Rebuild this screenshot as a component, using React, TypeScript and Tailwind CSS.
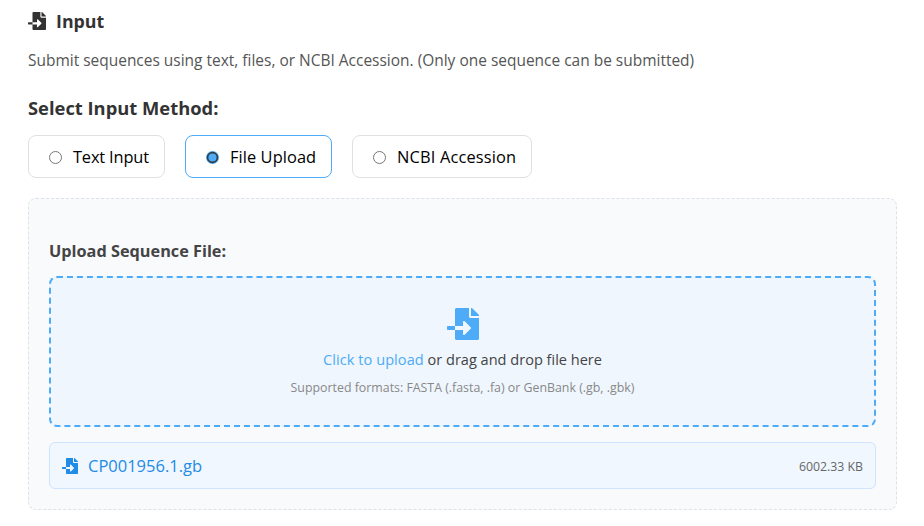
import { useState } from 'react';
import { FaFileImport } from 'react-icons/fa';

const methods = [
  { label: 'Text Input', width: 'w-[137px]', tracking: '-tracking-[0.01em]' },
  { label: 'File Upload', width: 'w-[147px]', tracking: 'tracking-[0.005em]' },
  { label: 'NCBI Accession', width: 'w-[180px]', tracking: 'tracking-[0.01em]' },
];

function Radio({ checked }: { checked: boolean }) {
  return (
    <svg viewBox="0 0 13 13" className="size-[13px] shrink-0">
      {checked ? (
        <>
          <circle cx="6.5" cy="6.5" r="6.5" fill="#4dabf7" />
          <circle cx="6.5" cy="6.5" r="4.9" fill="#4dabf7" stroke="#343a40" strokeWidth="1.6" />
        </>
      ) : (
        <circle cx="6.5" cy="6.5" r="6" fill="#fff" stroke="#767676" />
      )}
    </svg>
  );
}

export default function App() {
  const [method, setMethod] = useState('File Upload');
  return (
    <main className="h-[526px] overflow-hidden bg-white pr-[27px] pl-7 font-['Open_Sans','Noto_Sans',sans-serif] text-[#333]">
      <h2 className="flex h-[42px] items-center gap-[10px] text-[17.8px] font-bold">
        <FaFileImport className="size-[18px]" />
        Input
      </h2>
      <p className="flex h-[38px] items-center text-[15.47px] whitespace-nowrap text-[#555]">
        Submit sequences using text, files, or NCBI Accession. (Only one sequence can be submitted)
      </p>
      <h3 className="flex h-[55px] items-center text-[18.35px] font-bold">Select Input Method:</h3>
      <div className="flex gap-5">
        {methods.map((m) => (
          <button
            key={m.label}
            onClick={() => setMethod(m.label)}
            className={`flex h-[43px] items-center gap-[11px] rounded-lg border pt-[2px] pl-5 text-[16.4px] whitespace-nowrap text-black ${m.width} ${m.tracking} ${
              method === m.label ? 'border-[#4dabf7]' : 'border-[#e0e0e0]'
            }`}
          >
            <Radio checked={method === m.label} />
            {m.label}
          </button>
        ))}
      </div>
      <section className="mt-5 h-[312px] rounded-lg border border-dashed border-[#dee2e6] bg-[#f9fafc] px-5">
        <h4 className="flex h-[77px] items-end pb-[13px] text-[16.27px] leading-[24px] font-bold text-[#444]">
          Upload Sequence File:
        </h4>
        <div className="flex h-[151px] flex-col items-center rounded-lg border-2 border-dashed border-[#4dabf7] bg-[#eff6fd] pt-[30px]">
          <FaFileImport className="size-8 text-[#4dabf7]" />
          <p className="mt-[7px] text-[14.55px] leading-[24px] text-[#444]">
            <span className="tracking-[0.004em] text-[#4dabf7]">Click to upload</span> or drag and drop file here
          </p>
          <p className="mt-[7px] text-[12.37px] leading-[20px] text-[#888]">
            Supported formats: FASTA (.fasta, .fa) or GenBank (.gb, .gbk)
          </p>
        </div>
        <div className="mt-[15px] flex h-[47px] items-center rounded-md border border-[#d0e3ff] bg-[#f0f7ff] px-3 text-[#228be6]">
          <FaFileImport className="size-4" />
          <span className="ml-[10px] pt-[2px] text-[16.5px]">CP001956.1.gb</span>
          <span className="ml-auto pt-[3px] text-[12.3px] text-[#666]">6002.33 KB</span>
        </div>
      </section>
    </main>
  );
}
